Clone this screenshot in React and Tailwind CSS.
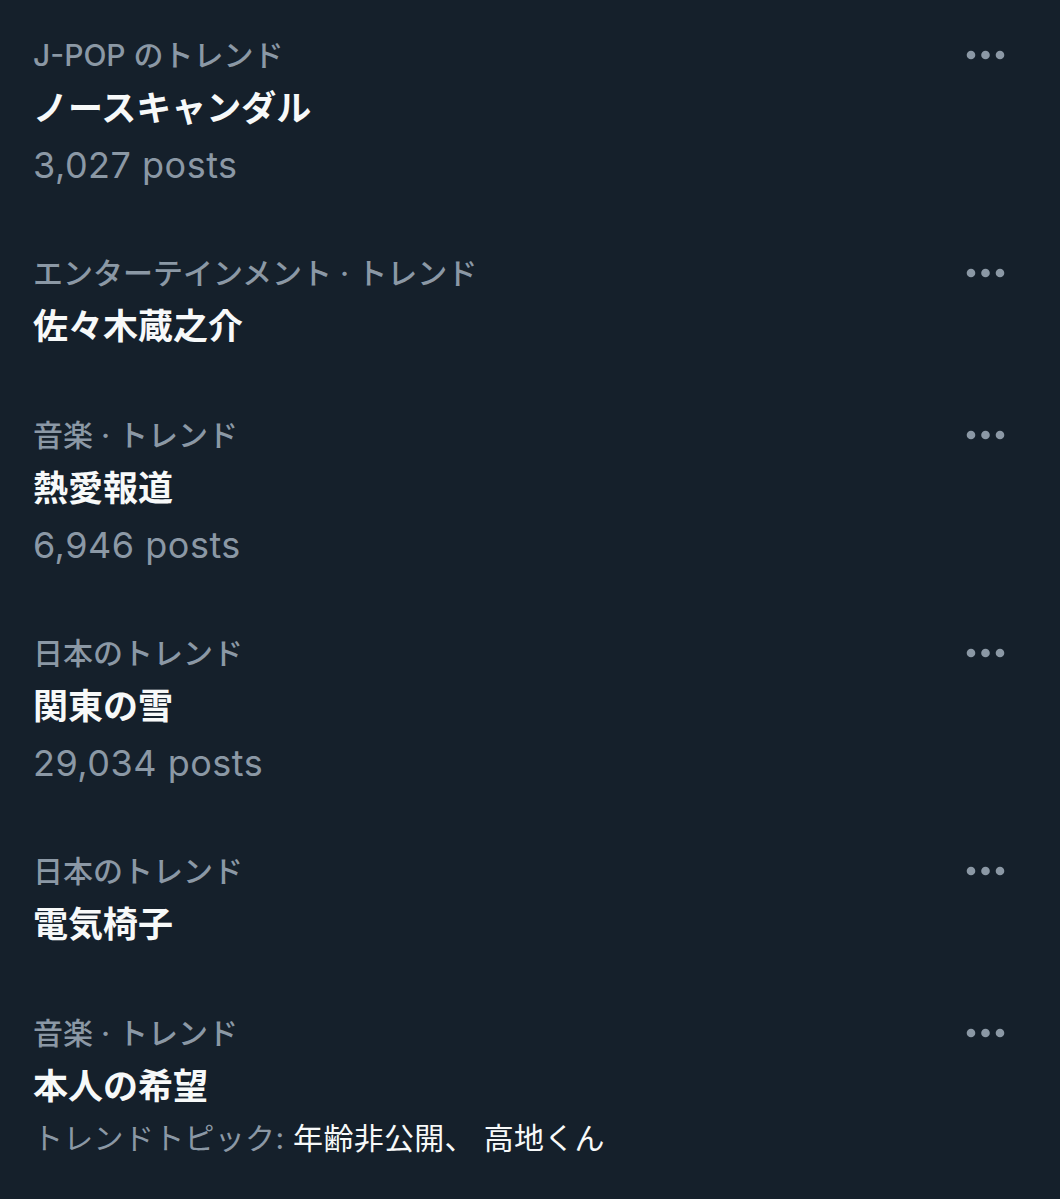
import React from "react";

const trends = [
  { cat: "J-POP のトレンド", title: "ノースキャンダル", posts: "3,027 posts" },
  { cat: "エンターテインメント · トレンド", title: "佐々木蔵之介" },
  { cat: "音楽 · トレンド", title: "熱愛報道", posts: "6,946 posts" },
  { cat: "日本のトレンド", title: "関東の雪", posts: "29,034 posts" },
  { cat: "日本のトレンド", title: "電気椅子" },
  {
    cat: "音楽 · トレンド",
    title: "本人の希望",
    topic: { label: "トレンドトピック: ", value: "年齢非公開、 高地くん" },
  },
];

function Dots() {
  return (
    <svg width="40" height="10" viewBox="0 0 40 10" className="shrink-0">
      <circle cx="5" cy="5" r="4.3" fill="#8b98a5" />
      <circle cx="19.5" cy="5" r="4.3" fill="#8b98a5" />
      <circle cx="34" cy="5" r="4.3" fill="#8b98a5" />
    </svg>
  );
}

export default function App() {
  return (
    <div
      className="min-h-[1199px] w-full bg-[#15202b]"
      style={{ fontFamily: "Inter, 'Noto Sans CJK JP', sans-serif" }}
    >
      {trends.map((t, i) => (
        <div key={i} className="pl-[33px] pr-[54px] pt-[31px] pb-[25px]">
          <div className="flex items-center justify-between h-[48px]">
            <span className="text-[30px] leading-[48px] font-medium text-[#8b98a5] whitespace-nowrap">
              {t.cat}
            </span>
            <Dots />
          </div>
          <div className="text-[35px] leading-[58px] font-bold text-[#f7f9f9] whitespace-nowrap">
            {t.title}
          </div>
          {t.posts && (
            <div className="text-[36px] leading-[56px] tracking-[0.5px] text-[#8b98a5] whitespace-nowrap">
              {t.posts}
            </div>
          )}
          {t.topic && (
            <div className="text-[30px] leading-[46px] tracking-[0.3px] whitespace-nowrap">
              <span className="text-[#8b98a5]">{t.topic.label}</span>
              <span className="text-[#f7f9f9]">{t.topic.value}</span>
            </div>
          )}
        </div>
      ))}
    </div>
  );
}
